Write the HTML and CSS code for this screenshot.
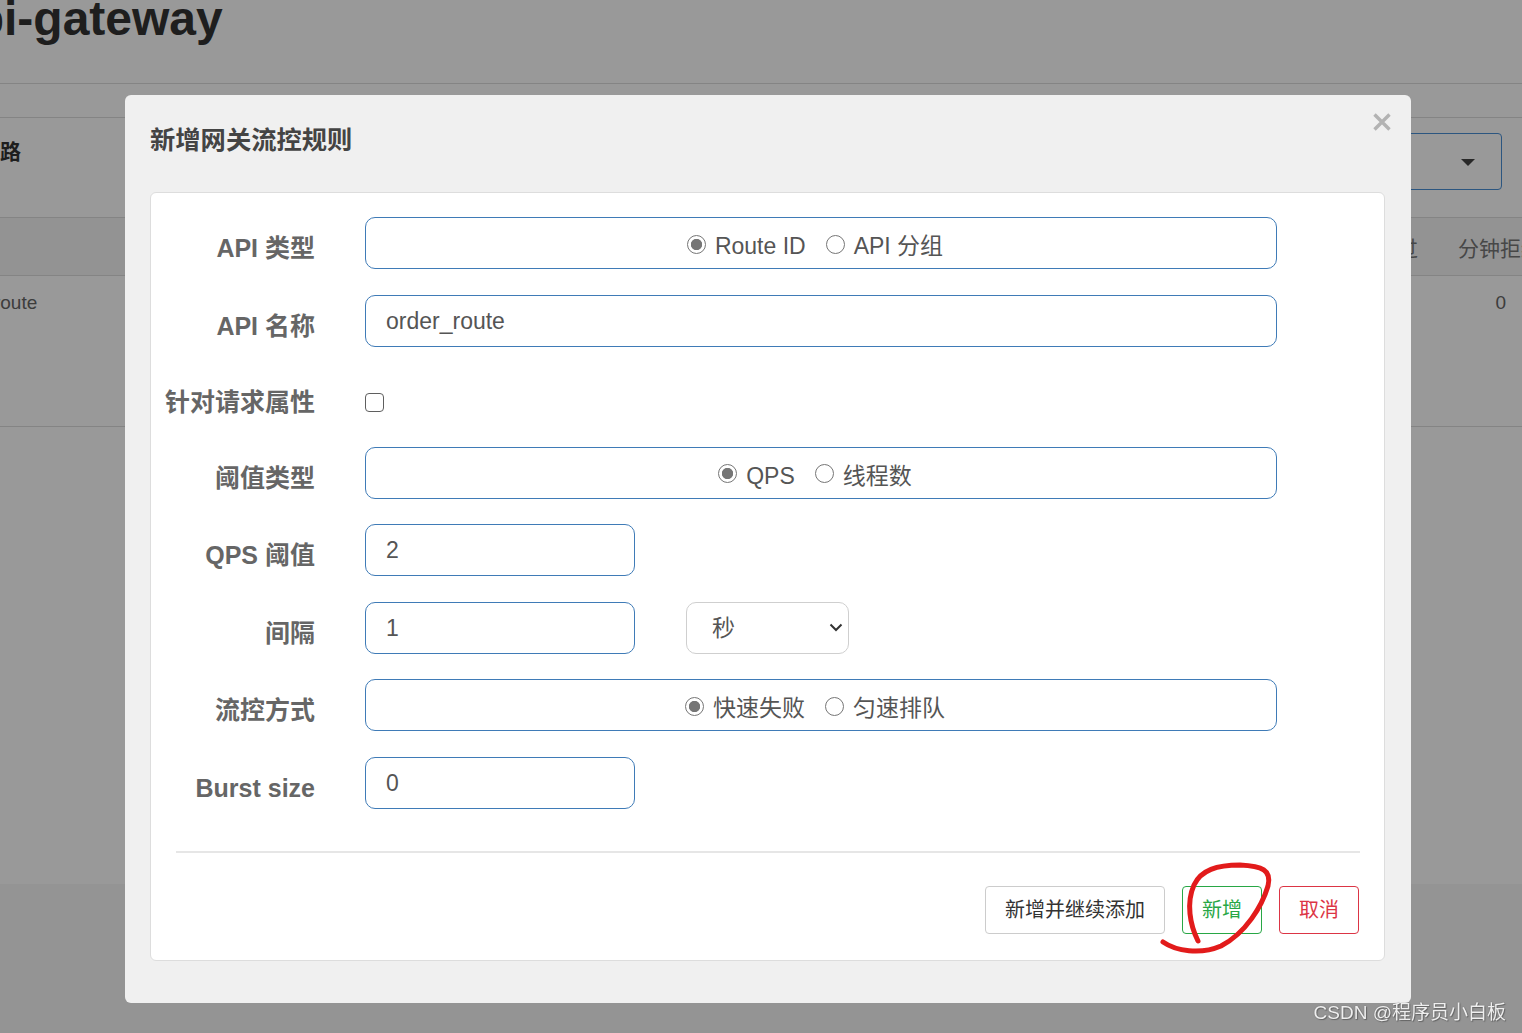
FILE: index.html
```html
<!DOCTYPE html>
<html lang="zh-CN">
<head>
<meta charset="utf-8">
<title>新增网关流控规则</title>
<link rel="stylesheet" href="styles.css">
</head>
<body>
<div class="page">
  <header class="page-head"><h1 class="app-title">api-gateway</h1></header>
  <section class="panel">
    <div class="panel-head">
      <span class="panel-title">簇点链路</span>
      <div class="app-select"><span class="caret"></span></div>
    </div>
    <div class="table-head">
      <span class="th th-pass">QPS通过</span>
      <span class="th th-block">分钟拒绝QPS</span>
    </div>
    <div class="table-row">
      <span class="td td-name">order_route</span>
      <span class="td td-num">0</span>
    </div>
  </section>
</div>

<div class="backdrop"></div>

<div class="modal-layer">
  <div class="modal">
    <div class="modal-header">
      <h4 class="modal-title">新增网关流控规则</h4>
      <button class="close" type="button" aria-label="关闭">
        <svg width="18" height="18" viewBox="0 0 18 18"><path d="M1.5 1.5 L16.5 16.5 M16.5 1.5 L1.5 16.5" stroke="#b3b3b3" stroke-width="3.4" stroke-linecap="butt"/></svg>
      </button>
    </div>
    <div class="modal-card">
      <div class="form">
        <label class="f-label">API 类型</label>
        <div class="f-ctrl">
          <div class="box wide radio-box">
            <label class="radio"><input type="radio" name="apitype" checked><span>Route ID</span></label>
            <label class="radio"><input type="radio" name="apitype"><span>API 分组</span></label>
          </div>
        </div>

        <label class="f-label">API 名称</label>
        <div class="f-ctrl"><input class="box wide text-input" type="text" value="order_route"></div>

        <label class="f-label f-label-tight">针对请求属性</label>
        <div class="f-ctrl check-row"><input class="checkbox" type="checkbox"></div>

        <label class="f-label">阈值类型</label>
        <div class="f-ctrl">
          <div class="box wide radio-box">
            <label class="radio"><input type="radio" name="grade" checked><span>QPS</span></label>
            <label class="radio"><input type="radio" name="grade"><span>线程数</span></label>
          </div>
        </div>

        <label class="f-label">QPS 阈值</label>
        <div class="f-ctrl"><input class="box small text-input" type="text" value="2"></div>

        <label class="f-label">间隔</label>
        <div class="f-ctrl pair">
          <input class="box small text-input" type="text" value="1">
          <div class="select-wrap">
            <select class="unit-select"><option>秒</option></select>
            <svg class="chev" width="14" height="9" viewBox="0 0 14 9"><path d="M1.5 1.5 L7 7 L12.5 1.5" fill="none" stroke="#333" stroke-width="2"/></svg>
          </div>
        </div>

        <label class="f-label">流控方式</label>
        <div class="f-ctrl">
          <div class="box wide radio-box">
            <label class="radio"><input type="radio" name="behavior" checked><span>快速失败</span></label>
            <label class="radio"><input type="radio" name="behavior"><span>匀速排队</span></label>
          </div>
        </div>

        <label class="f-label">Burst size</label>
        <div class="f-ctrl"><input class="box small text-input" type="text" value="0"></div>
      </div>

      <div class="divider"></div>

      <div class="footer">
        <button class="btn btn-default" type="button">新增并继续添加</button>
        <button class="btn btn-success" type="button">新增</button>
        <button class="btn btn-danger" type="button">取消</button>
      </div>
    </div>
  </div>
</div>

<svg class="scribble" width="130" height="105" viewBox="1152 856 130 105">
  <path d="M1163 942 C1176 951 1200 955 1221 946 C1246 933 1262 906 1268 886 C1272 870 1262 866 1240 865 C1217 865 1201 870 1194 885 C1186 903 1190 925 1198 941" fill="none" stroke="#e21b1b" stroke-width="5" stroke-linecap="round" stroke-linejoin="round"/>
</svg>

<div class="watermark">CSDN @程序员小白板</div>
</body>
</html>
```

FILE: styles.css
```css
* { box-sizing: border-box; }
html, body { margin: 0; padding: 0; }
body {
  width: 1522px;
  height: 1033px;
  overflow: hidden;
  position: relative;
  background: #f7f7f7;
  font-family: "Liberation Sans", "Noto Sans CJK SC", sans-serif;
  color: #333;
}

/* ---------- background page ---------- */
.page { height: 884px; background: #fff; }
.page-head { height: 84px; border-bottom: 1px solid #ddd; overflow: hidden; }
.app-title {
  margin: -5px 0 0 -52px;
  font-size: 48px;
  line-height: 48px;
  font-weight: bold;
  color: #333;
  white-space: nowrap;
}
.panel { margin-top: 33px; border-top: 1px solid #ddd; }
.panel-head {
  height: 100px;
  border-bottom: 1px solid #ddd;
  display: flex;
  justify-content: space-between;
  align-items: flex-start;
  padding: 0 20px 0 0;
}
.panel-title {
  margin: 19px 0 0 -63px;
  font-size: 21px;
  line-height: 30px;
  font-weight: bold;
  color: #333;
  white-space: nowrap;
}
.app-select {
  margin-top: 15px;
  width: 300px;
  height: 57px;
  border: 1px solid #4a8fd6;
  border-radius: 4px;
  display: flex;
  justify-content: flex-end;
  align-items: center;
  padding-right: 26px;
}
.caret {
  width: 0; height: 0;
  border-left: 7px solid transparent;
  border-right: 7px solid transparent;
  border-top: 7px solid #444;
  margin-top: 2px;
}
.table-head {
  height: 58px;
  background: #f5f5f5;
  border-bottom: 1px solid #ddd;
  display: flex;
  justify-content: flex-end;
  align-items: center;
  gap: 40px;
  font-size: 21px;
  color: #777;
  white-space: nowrap;
}
.th-block { width: 64px; overflow: visible; }
.table-row {
  height: 151px;
  border-bottom: 1px solid #ddd;
  display: flex;
  justify-content: space-between;
  align-items: flex-start;
  padding: 15px 16px 0 0;
  font-size: 19px;
  line-height: 24px;
  color: #666;
}
.td-name { margin-left: -61px; }

/* ---------- modal ---------- */
.backdrop { position: fixed; inset: 0; background: rgba(0, 0, 0, 0.4); }
.modal-layer { position: fixed; inset: 0; }
.modal {
  margin: 95px 0 0 125px;
  width: 1286px;
  background: #f0f0f0;
  border-radius: 6px;
  padding: 0 26px 42px 25px;
}
.modal-header {
  display: flex;
  justify-content: space-between;
  align-items: flex-start;
  margin-right: -6px;
  height: 62px;
  margin-bottom: 35px;
}
.modal-title {
  margin: 28px 0 0 0;
  font-size: 25.3px;
  line-height: 34px;
  font-weight: bold;
  color: #444;
}
.close {
  margin-top: 18px;
  padding: 0;
  border: 0;
  background: none;
  width: 18px;
  height: 18px;
  display: block;
}
.close svg { display: block; }

.modal-card {
  background: #fff;
  border: 1px solid #ddd;
  border-radius: 6px;
  padding: 24px 0 26px 0;
}
.form {
  display: grid;
  grid-template-columns: 164px 1fr;
  column-gap: 50px;
  row-gap: 25.5px;
}
.f-label {
  text-align: right;
  font-size: 25px;
  font-weight: bold;
  color: #666;
  line-height: 42px;
  padding-top: 10px;
  white-space: nowrap;
}
.f-label-tight { line-height: 38px; padding-top: 11px; }
.f-ctrl { display: flex; align-items: center; min-height: 52px; }
.check-row { min-height: 49px; height: 49px; padding-top: 11px; }
.pair { gap: 51px; }

.box {
  height: 52px;
  border: 1px solid #3f7bb7;
  border-radius: 10px;
  background: #fff;
}
.wide { width: 912px; }
.small { width: 270px; }
.text-input {
  font-family: "Liberation Sans", "Noto Sans CJK SC", sans-serif;
  font-size: 23px;
  color: #555;
  padding: 1px 20px 0 20px;
  outline: none;
}
.radio-box {
  display: flex;
  justify-content: center;
  align-items: center;
  gap: 20px;
  padding: 6px 12px 0 0;
}
.radio {
  display: flex;
  align-items: center;
  gap: 9px;
  font-size: 23px;
  line-height: 30px;
  height: 30px;
  color: #555;
  white-space: nowrap;
}
.radio span { display: block; height: 30px; line-height: 30px; }
.radio input {
  appearance: none;
  -webkit-appearance: none;
  margin: -4px 0 0 0;
  width: 19px;
  height: 19px;
  border: 1.6px solid #767676;
  border-radius: 50%;
  background: #fff;
}
.radio input:checked {
  background: radial-gradient(circle, #767676 0 5.3px, #fff 6px);
}
.checkbox {
  appearance: none;
  -webkit-appearance: none;
  margin: 0;
  width: 19px;
  height: 19px;
  border: 1.6px solid #5f5f5f;
  border-radius: 4px;
  background: #fff;
}

.select-wrap { display: grid; width: 163px; height: 52px; }
.unit-select, .chev { grid-area: 1 / 1; }
.unit-select {
  appearance: none;
  -webkit-appearance: none;
  width: 163px;
  height: 52px;
  border: 1px solid #cfcfcf;
  border-radius: 10px;
  background: #fff;
  padding: 0 0 0 25px;
  font-family: "Liberation Sans", "Noto Sans CJK SC", sans-serif;
  font-size: 23px;
  color: #555;
  outline: none;
}
.chev { justify-self: end; align-self: center; margin-right: 6px; }

.divider {
  height: 2px;
  background: #e6e6e6;
  margin: 42px 24px 0 25px;
}
.footer {
  display: flex;
  justify-content: flex-end;
  gap: 17px;
  padding: 33px 25px 0 0;
}
.btn {
  height: 48px;
  padding: 0 19px;
  border-radius: 4px;
  background: #fff;
  font-family: "Liberation Sans", "Noto Sans CJK SC", sans-serif;
  font-size: 20px;
  line-height: 46px;
}
.btn-default { border: 1px solid #ccc; color: #333; }
.btn-success { border: 1px solid #28a745; color: #28a745; }
.btn-danger { border: 1px solid #dc3545; color: #dc3545; }

.scribble { position: absolute; left: 1152px; top: 856px; }
.watermark {
  position: absolute;
  right: 16px;
  bottom: 8px;
  font-size: 19px;
  line-height: 24px;
  color: rgba(255, 255, 255, 0.9);
  text-shadow: 0 0 1px #555, 1px 1px 1px #666;
  white-space: nowrap;
}
```
